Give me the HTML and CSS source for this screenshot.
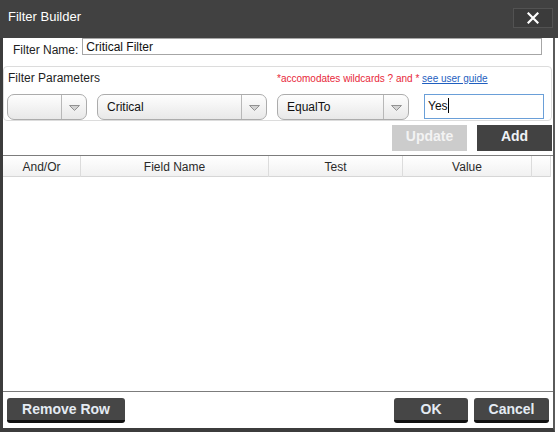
FILE: index.html
```html
<!DOCTYPE html>
<html>
<head>
<meta charset="utf-8">
<title>Filter Builder</title>
<link rel="stylesheet" href="styles.css">
</head>
<body>
<div class="window">
  <div class="titlebar">
    <span class="title">Filter Builder</span>
    <button class="close" aria-label="Close">
      <svg width="12" height="12" viewBox="0 0 12 12"><path d="M1.5 1.5 L10.5 10.5 M10.5 1.5 L1.5 10.5" stroke="#ffffff" stroke-width="2.2" stroke-linecap="square" fill="none"/></svg>
    </button>
  </div>
  <div class="main">
    <div class="content">
      <div class="name-row">
        <span class="name-label">Filter Name:</span>
        <div class="name-input">Critical Filter</div>
      </div>

      <div class="group">
        <div class="group-head">
          <span class="group-label">Filter Parameters</span>
          <span class="note">*accomodates wildcards ? and * <a class="guide">see user guide</a></span>
        </div>
        <div class="controls">
          <div class="dd dd-small">
            <span class="dd-text"></span>
            <span class="dd-arrow"><svg width="11" height="6" viewBox="0 0 11 6"><path d="M0.5 0.5 H10.5 L5.5 5.5 Z" fill="#d2d2d2" stroke="#929292" stroke-width="1"/></svg></span>
          </div>
          <div class="dd dd-field">
            <span class="dd-text">Critical</span>
            <span class="dd-arrow"><svg width="11" height="6" viewBox="0 0 11 6"><path d="M0.5 0.5 H10.5 L5.5 5.5 Z" fill="#d2d2d2" stroke="#929292" stroke-width="1"/></svg></span>
          </div>
          <div class="dd dd-test">
            <span class="dd-text">EqualTo</span>
            <span class="dd-arrow"><svg width="11" height="6" viewBox="0 0 11 6"><path d="M0.5 0.5 H10.5 L5.5 5.5 Z" fill="#d2d2d2" stroke="#929292" stroke-width="1"/></svg></span>
          </div>
          <div class="value-input">Yes<span class="caret"></span></div>
        </div>
      </div>

      <div class="actions">
        <button class="btn-flat btn-update">Update</button>
        <button class="btn-flat btn-add">Add</button>
      </div>

      <div class="grid">
        <div class="grid-head">
          <div class="col">And/Or</div>
          <div class="col">Field Name</div>
          <div class="col">Test</div>
          <div class="col">Value</div>
          <div class="col"></div>
        </div>
        <div class="grid-body"></div>
      </div>

      <div class="footer">
        <button class="btn-dark btn-remove">Remove Row</button>
        <span class="spacer"></span>
        <button class="btn-dark btn-ok">OK</button>
        <button class="btn-dark btn-cancel">Cancel</button>
      </div>
    </div>
    <div class="outside"></div>
  </div>
</div>
</body>
</html>
```

FILE: styles.css
```css
* { box-sizing: border-box; }

body {
  margin: 0;
  width: 558px;
  height: 432px;
  overflow: hidden;
  background: #ffffff;
  font-family: "Liberation Sans", Arial, sans-serif;
  font-size: 12px;
  color: #1e1e1e;
}

.window {
  display: flex;
  flex-direction: column;
  height: 432px;
}

.titlebar {
  height: 38px;
  flex: none;
  background: #414141;
  display: flex;
  align-items: flex-start;
  justify-content: space-between;
  padding: 0 5px 0 8px;
}

.title {
  color: #ffffff;
  font-size: 13px;
  line-height: 16px;
  margin-top: 9px;
}

.close {
  width: 40px;
  height: 20px;
  margin-top: 8px;
  padding: 0;
  background: #3b3b3b;
  border: 1px solid #525252;
  display: flex;
  align-items: center;
  justify-content: center;
}

.main {
  flex: 1;
  display: flex;
  min-height: 0;
}

.content {
  width: 555px;
  flex: none;
  border-left: 3px solid #3c3c3c;
  border-right: 2px solid #5a5a5a;
  border-bottom: 4px solid #3c3c3c;
  display: flex;
  flex-direction: column;
}

.outside {
  flex: 1;
  background: #ffffff;
}

/* Filter name */
.name-row {
  display: flex;
  align-items: flex-start;
  height: 17px;
  flex: none;
  padding-left: 10px;
}

.name-label {
  line-height: 14px;
  margin-top: 5px;
  color: #222222;
}

.name-input {
  width: 460px;
  height: 17px;
  margin-left: 4px;
  border: 1px solid #a6a6a6;
  padding: 1px 3px;
  line-height: 14px;
  color: #111111;
}

/* Group box */
.group {
  flex: none;
  height: 55px;
  margin-top: 11px;
  margin-right: 1px;
  border: 1px solid #dcdcdc;
  border-radius: 4px;
  padding: 4px 0 1px 3px;
}

.group-head {
  display: flex;
  align-items: baseline;
  line-height: 14px;
}

.group-label {
  width: 270px;
  padding-left: 1px;
  color: #1e1e1e;
}

.note {
  font-size: 10px;
  color: #e8283a;
}

.guide {
  color: #1f5fbf;
  text-decoration: underline;
}

.controls {
  display: flex;
  align-items: flex-start;
  margin-top: 8px;
  height: 26px;
}

.dd {
  height: 26px;
  border: 1px solid #acacac;
  border-radius: 7px;
  background: linear-gradient(#fefefe, #e8e8e8);
  display: flex;
}

.dd-small { width: 80px; }
.dd-field { width: 170px; margin-left: 10px; }
.dd-test { width: 132px; margin-left: 10px; }

.dd-text {
  flex: 1;
  padding-left: 9px;
  line-height: 24px;
  color: #111111;
}

.dd-arrow {
  width: 25px;
  border-left: 1px solid #b8b8b8;
  display: flex;
  align-items: center;
  justify-content: center;
  padding-top: 1px;
}

.value-input {
  width: 120px;
  height: 25px;
  margin-left: 15px;
  border: 1px solid #6a9fd8;
  padding-left: 3px;
  line-height: 23px;
  color: #111111;
  background: #ffffff;
}

.caret {
  display: inline-block;
  width: 1px;
  height: 15px;
  background: #000000;
  vertical-align: -3px;
}

/* Update / Add */
.actions {
  flex: none;
  display: flex;
  justify-content: flex-end;
  gap: 10px;
  margin-top: 4px;
  padding-right: 1px;
}

.btn-flat {
  width: 75px;
  height: 26px;
  border: none;
  padding: 0 0 4px 0;
  font-family: "Liberation Sans", Arial, sans-serif;
  font-weight: bold;
  font-size: 14px;
  line-height: 22px;
}

.btn-update {
  background: #cccccc;
  color: #f3f3f3;
}

.btn-add {
  background: #424242;
  color: #eef2f6;
}

/* Grid */
.grid {
  flex: 1;
  min-height: 0;
  margin-top: 4px;
  border-top: 1px solid #7c7c7c;
  border-bottom: 1px solid #7c7c7c;
  display: flex;
  flex-direction: column;
}

.grid-head {
  flex: none;
  display: grid;
  grid-template-columns: 78px 188px 134px 129px 19px;
  width: 548px;
  height: 21px;
  border-bottom: 1px solid #d6d6d6;
  background: linear-gradient(#ffffff, #f1f1f1);
}

.col {
  border-right: 1px solid #dcdcdc;
  text-align: center;
  line-height: 20px;
  padding-top: 1px;
  color: #2a2a2a;
}

.grid-body {
  flex: 1;
  background: #ffffff;
}

/* Footer */
.footer {
  flex: none;
  display: flex;
  align-items: flex-start;
  gap: 6px;
  margin: 6px 4px 5px 4px;
}

.spacer { flex: 1; }

.btn-dark {
  height: 25px;
  border: none;
  border-bottom: 3px solid #111111;
  border-radius: 3px;
  background: #464646;
  color: #e4ebf3;
  padding: 0;
  font-family: "Liberation Sans", Arial, sans-serif;
  font-weight: bold;
  font-size: 14px;
  line-height: 22px;
}

.btn-remove { width: 118px; }
.btn-ok { width: 74px; }
.btn-cancel { width: 75px; }
```
